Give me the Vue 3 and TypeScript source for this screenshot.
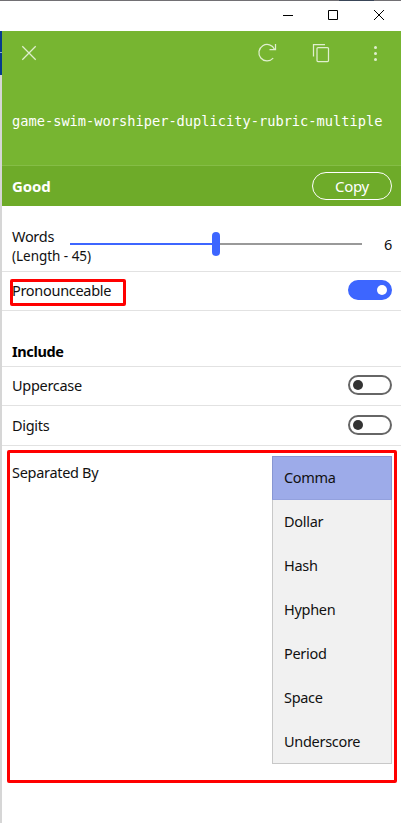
<script setup lang="ts">
import { ref } from 'vue'

interface Option { name: string; on: boolean }

const password = 'game-swim-worshiper-duplicity-rubric-multiple'
const words = ref(6)
const pronounceable = ref(true)
const includes = ref<Option[]>([
  { name: 'Uppercase', on: false },
  { name: 'Digits', on: false },
])
const separators = ['Comma', 'Dollar', 'Hash', 'Hyphen', 'Period', 'Space', 'Underscore']
const selected = ref('Comma')
</script>

<template>
  <div class="screen">
    <div class="backdrop-top"><i class="navy"></i></div>
    <header class="titlebar">
      <svg width="12" height="12" viewBox="0 0 12 12"><path d="M2 6.5H12" /></svg>
      <svg width="12" height="12" viewBox="0 0 12 12"><path d="M1.5 1.5H10.5V10.5H1.5Z" /></svg>
      <svg class="close" width="12" height="12" viewBox="0 0 12 12"><path d="M1 1L11 11M11 1L1 11" /></svg>
    </header>
    <div class="body">
      <aside class="edge"></aside>
      <main class="panel">
        <section class="hero">
          <nav class="toolbar">
            <svg class="dismiss" width="16" height="16" viewBox="0 0 16 16"><path d="M1.3 1.3L14.7 14.7M14.7 1.3L1.3 14.7" /></svg>
            <svg class="refresh" width="20" height="20" viewBox="0 0 20 20"><path d="M16.2 15.2A8.2 8.2 0 1 1 17.6 6.4M18.5 1V6.5H12.5" /></svg>
            <svg class="copy-icon" width="18" height="20" viewBox="0 0 18 20"><path d="M1.5 13.5V1.5H13M5 5.5Q5 4.5 6 4.5H15.5Q16.5 4.5 16.5 5.5V17.5Q16.5 18.5 15.5 18.5H6Q5 18.5 5 17.5Z" /></svg>
            <svg class="more" width="4" height="16" viewBox="0 0 4 16"><circle cx="1.5" cy="2.5" r="1.5" /><circle cx="1.5" cy="8.5" r="1.5" /><circle cx="1.5" cy="14.5" r="1.5" /></svg>
          </nav>
          <p class="password">{{ password }}</p>
        </section>
        <section class="strength">
          <strong>Good</strong>
          <button class="copy">Copy</button>
        </section>
        <section class="row words">
          <div class="words-label"><span>Words</span><span class="length">(Length - 45)</span></div>
          <div class="slider"><span class="filled"></span><span class="thumb"></span><span class="rest"></span></div>
          <span class="count">{{ words }}</span>
        </section>
        <section class="row pron">
          <span class="pron-label">Pronounceable</span>
          <span class="highlight small"></span>
          <span class="toggle" :class="{ on: pronounceable }" @click="pronounceable = !pronounceable"></span>
        </section>
        <section class="row include"><strong>Include</strong></section>
        <section v-for="o in includes" :key="o.name" class="row option" :class="o.name.toLowerCase()">
          <span class="option-label">{{ o.name }}</span>
          <span class="toggle" :class="{ on: o.on }" @click="o.on = !o.on"></span>
        </section>
        <section class="separated">
          <span class="highlight large"></span>
          <span class="sep-label">Separated By</span>
          <ul class="list">
            <li v-for="s in separators" :key="s" :class="[s.toLowerCase(), { selected: s === selected }]" @click="selected = s">{{ s }}</li>
          </ul>
        </section>
      </main>
    </div>
  </div>
</template>

<style>
body { margin: 0; background: #fff; }
</style>

<style scoped>
* { box-sizing: border-box; }
.screen { width: 401px; height: 823px; overflow: hidden; display: flex; flex-direction: column; background: #fff; color: #111; font: 14.5px/20px "Noto Sans", "Open Sans", sans-serif; letter-spacing: -0.3px; }
.backdrop-top { height: 1px; background: #727074; display: flex; justify-content: flex-end; padding-right: 27px; }
.navy { width: 35px; background: #394557; }
.titlebar { height: 30px; display: flex; justify-content: flex-end; padding: 8px 16px 0 0; gap: 34px; }
.titlebar svg { fill: none; stroke: #000; stroke-width: 1; }
.body { flex: 1; display: flex; }
.edge { width: 2px; background: linear-gradient(#063b8c 0 21px, #8fa9cf 21px 22px, #063b8c 22px 44px, #d6d6d6 44px); }
.panel { flex: 1; min-width: 0; }
.hero { height: 135px; background: #77b531; border-bottom: 1px solid #85bd46; }
.toolbar { height: 44px; display: flex; align-items: center; padding: 0 23px 0 19px; }
.toolbar svg { fill: none; stroke: #e0efcf; stroke-width: 1.25; }
.toolbar .refresh { margin-left: auto; }
.toolbar .copy-icon { margin-left: 35px; }
.toolbar .more { margin-left: 44px; fill: #e0efcf; stroke: none; }
.password { margin: 36px 0 0 10px; color: #fff; font: 13.68px/20px "DejaVu Sans Mono", monospace; letter-spacing: 0; white-space: nowrap; }
.strength { height: 40px; background: #6eab29; color: #fff; display: flex; align-items: center; justify-content: space-between; padding: 0 9px 0 10px; }
.strength strong { font-size: 15px; letter-spacing: -0.15px; }
.copy { width: 80px; height: 28px; padding: 0; border: 1px solid #fff; border-radius: 14px; background: transparent; color: #fff; font: 15px/26px "Noto Sans", sans-serif; letter-spacing: -0.3px; }
.row { position: relative; display: flex; align-items: center; justify-content: space-between; padding: 0 9px 2px 10px; border-bottom: 1px solid #e2e2e2; }
.words { height: 66px; align-items: flex-start; padding-top: 17px; }
.words-label { display: flex; flex-direction: column; width: 58px; white-space: nowrap; padding-top: 3px; }
.length { font-size: 13.5px; line-height: 20px; letter-spacing: -0.03px; }
.slider { width: 292px; height: 24px; display: flex; align-items: center; margin-top: 9px; }
.filled { width: 142px; height: 2px; background: #3d66ff; }
.thumb { width: 8px; height: 24px; border-radius: 4px; background: #3d66ff; }
.rest { flex: 1; height: 2px; background: #999; }
.count { margin: 11px 0 0 auto; }
.pron { height: 39px; }
.toggle { width: 44px; height: 20px; border: 2px solid #666; border-radius: 10px; display: flex; align-items: center; padding: 0 3px; cursor: pointer; }
.toggle::before { content: ""; width: 10px; height: 10px; border-radius: 50%; background: #333; }
.toggle.on { background: #3d66ff; border-color: #3d66ff; justify-content: flex-end; }
.toggle.on::before { background: #fff; }
.highlight { position: absolute; border: 3px solid #f00; border-radius: 2px; pointer-events: none; }
.highlight.small { left: 8px; top: 7px; width: 116px; height: 27px; }
.include { height: 56px; align-items: flex-end; padding-bottom: 5px; color: #000; }
.include strong { letter-spacing: -0.35px; }
.option { height: 39px; }
.digits { height: 40px; }
.separated { position: relative; height: 340px; display: flex; justify-content: space-between; align-items: flex-start; padding: 10px 9px 0 10px; }
.highlight.large { left: 5px; top: 4px; width: 390px; height: 333px; }
.sep-label { margin-top: 6px; }
.list { width: 120px; margin: 0; padding: 0; list-style: none; background: #f1f1f1; border: 1px solid #c8c8c8; border-top: 0; }
.list li { height: 44px; padding: 11px; }
.list li:last-child { height: 43px; }
.list .selected { background: #9dabe9; margin: 0 -1px; padding: 10px 11px; border: 1px solid #8796d2; border-bottom-color: #93a1de; }
</style>
